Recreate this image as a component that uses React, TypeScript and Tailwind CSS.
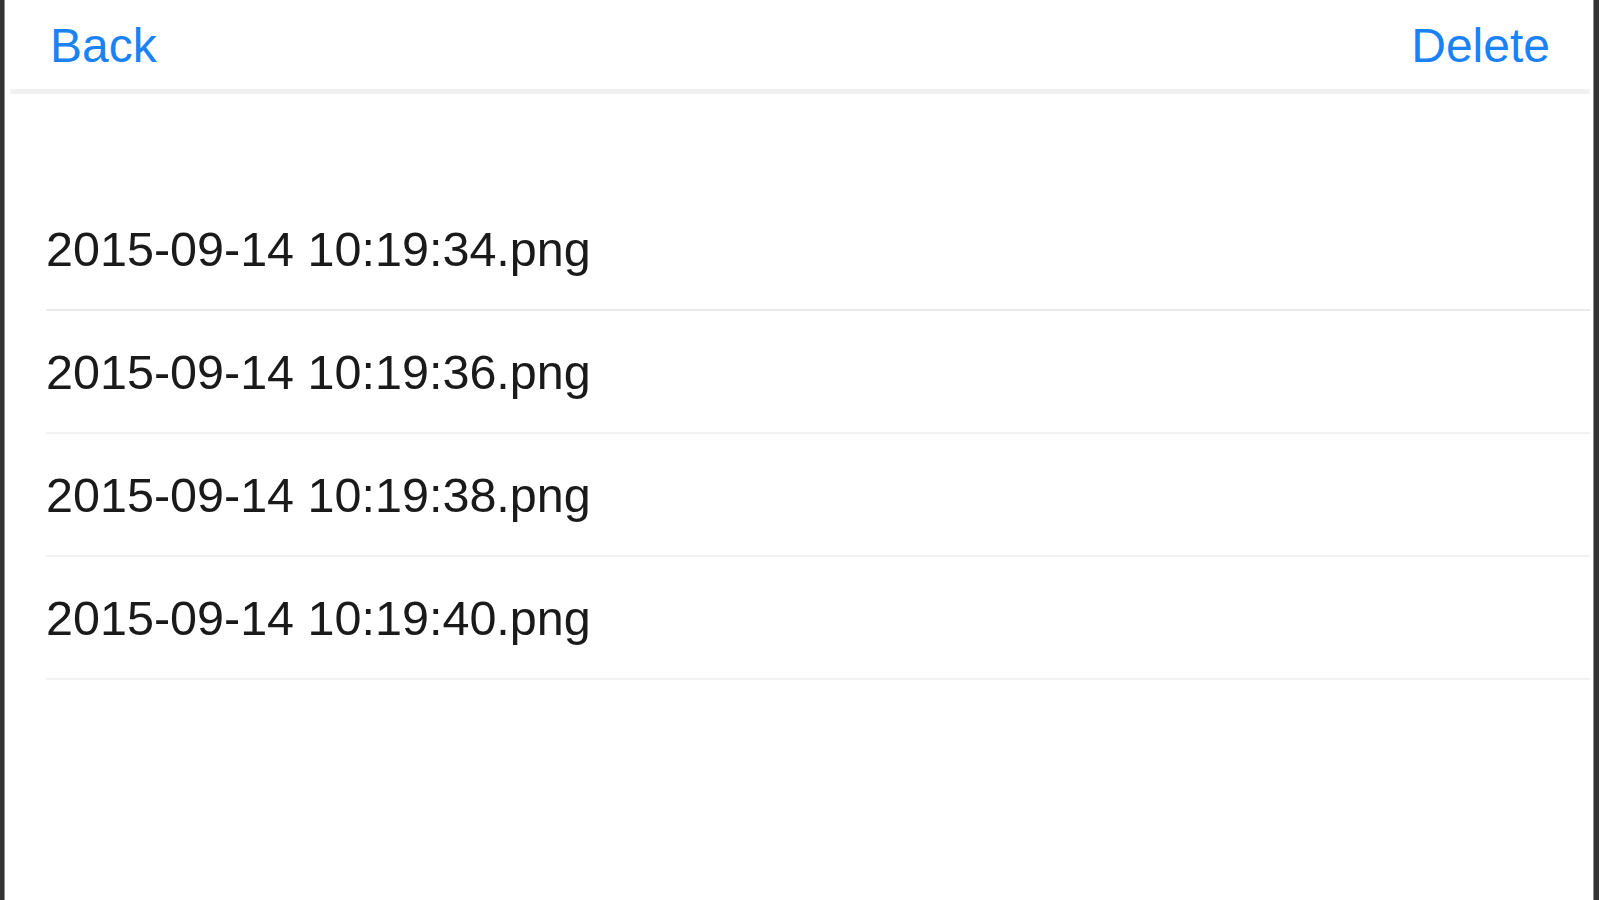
import React from 'react';

const files = [
  '2015-09-14 10:19:34.png',
  '2015-09-14 10:19:36.png',
  '2015-09-14 10:19:38.png',
  '2015-09-14 10:19:40.png',
];

export default function App() {
  return (
    <div className="flex h-[900px] w-full bg-white font-['Liberation_Sans',Arial,sans-serif]">
      {/* device frame edge, left */}
      <div className="flex w-[5px] shrink-0">
        <div className="w-[4px] bg-[#333333]" />
        <div className="w-[1px] bg-[#8f8f8f]" />
      </div>

      <div className="flex min-w-0 flex-1 flex-col">
        {/* nav bar */}
        <div className="flex h-[89px] items-start justify-between pt-[22px] pl-[45px] pr-[43px]">
          <button className="text-[48px] leading-none text-[#1b82f6]">Back</button>
          <button className="text-[48px] leading-none text-[#1b82f6]">Delete</button>
        </div>
        <div className="ml-[5px] mr-[3px] h-[5px] bg-[#f1f1f1]" />

        {/* table */}
        <div className="mt-[94px] flex flex-col pl-[41px]">
          {files.map((name) => (
            <div key={name} className="flex h-[123px] flex-col">
              <div className="pt-[37px] pb-[35px] text-[48.5px] leading-none text-[#1a1a1a]">{name}</div>
              <div className={`mr-[3px] h-[3px] ${name.endsWith('34.png') ? 'bg-[#ebebeb]' : 'bg-[#f2f2f2]'}`} />
            </div>
          ))}
        </div>
      </div>

      {/* device frame edge, right */}
      <div className="flex w-[6px] shrink-0">
        <div className="w-[1px] bg-[#8f8f8f]" />
        <div className="flex-1 bg-[#333333]" />
      </div>
    </div>
  );
}
